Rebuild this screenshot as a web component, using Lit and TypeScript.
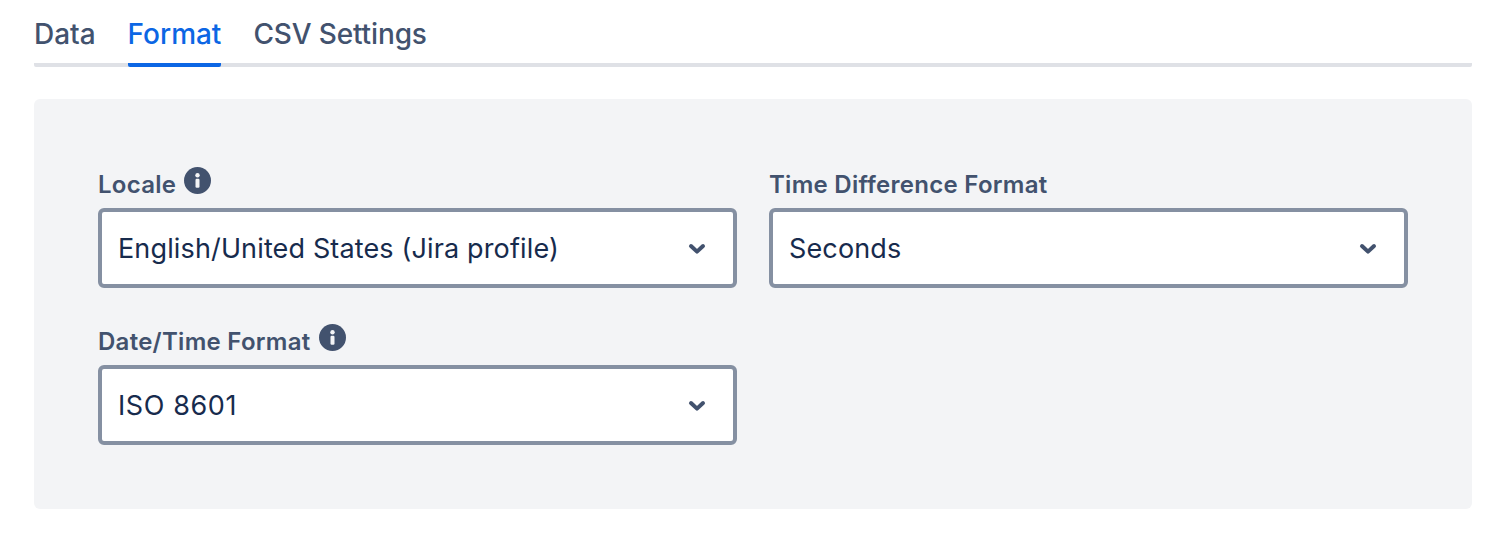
import { LitElement, html, css } from "lit";
import { customElement } from "lit/decorators.js";

const info = html`<svg class="info" viewBox="0 0 27 27" width="27" height="27" aria-hidden="true">
  <circle cx="13.5" cy="13.5" r="13.5" fill="#42526e"></circle>
  <circle cx="13.5" cy="8.2" r="2.2" fill="#f3f4f6"></circle>
  <rect x="11.5" y="11.8" width="4" height="9" rx="1.2" fill="#f3f4f6"></rect>
</svg>`;

const chevron = html`<svg class="chev" viewBox="0 0 18 12" width="18" height="12" aria-hidden="true">
  <path d="M3 3 L9 8.6 L15 3" fill="none" stroke="#42526e" stroke-width="4" stroke-linecap="round" stroke-linejoin="round"></path>
</svg>`;

@customElement("app-root")
export class AppRoot extends LitElement {
  static styles = css`
    :host {
      display: block;
      width: 1502px;
      height: 536px;
      background: #fff;
      font-family: Inter, "Liberation Sans", sans-serif;
      box-sizing: border-box;
      padding: 0 30px 0 34px;
      overflow: hidden;
    }
    .tabs {
      display: flex;
      gap: 32px;
      height: 67px;
      box-sizing: border-box;
      border-bottom: 4px solid #dfe1e6;
      border-radius: 2px;
    }
    .tab {
      font-size: 28px;
      font-weight: 500;
      letter-spacing: -0.02px;
      color: #42526e;
      line-height: 32px;
      padding-top: 18px;
      height: 67px;
      box-sizing: border-box;
      white-space: nowrap;
    }
    .tab.active {
      color: #0c66e4;
      border-bottom: 4px solid #0c66e4;
      border-radius: 2px;
    }
    .tab.csv {
      letter-spacing: -0.14px;
    }
    .panel {
      margin-top: 32px;
      height: 410px;
      box-sizing: border-box;
      background: #f3f4f6;
      border-radius: 6px;
      padding: 64px;
      display: grid;
      grid-template-columns: 639px 639px;
      column-gap: 32px;
      grid-auto-rows: 125px;
      row-gap: 32px;
      align-content: start;
    }
    .field {
      display: flex;
      flex-direction: column;
      justify-content: flex-end;
      height: 125px;
    }
    .label {
      display: flex;
      align-items: flex-start;
      gap: 8px;
      height: 45px;
      font-size: 24px;
      font-weight: 600;
      letter-spacing: 0.27px;
      color: #42526e;
      line-height: 32px;
      box-sizing: border-box;
      padding: 6px 0 0 0;
    }
    .info { margin-top: -2px; }
    .select {
      height: 80px;
      box-sizing: border-box;
      border: 4px solid #8590a2;
      border-radius: 6px;
      background: #fff;
      display: flex;
      align-items: center;
      justify-content: space-between;
      padding: 0 27px 0 16px;
      font-size: 27px;
      letter-spacing: 0.14px;
      color: #172b4d;
      white-space: nowrap;
    }
    .digits { letter-spacing: 0.6px; }
    .chev { margin-top: 2px; }
  `;

  private field(label: string, value: string, withInfo: boolean, digits = false) {
    return html`<div class="field">
      <div class="label"><span>${label}</span>${withInfo ? info : ""}</div>
      <div class="select"><span class=${digits ? "digits" : ""}>${value}</span>${chevron}</div>
    </div>`;
  }

  render() {
    return html`
      <div class="tabs">
        <div class="tab">Data</div>
        <div class="tab active">Format</div>
        <div class="tab csv">CSV Settings</div>
      </div>
      <div class="panel">
        ${this.field("Locale", "English/United States (Jira profile)", true)}
        ${this.field("Time Difference Format", "Seconds", false)}
        ${this.field("Date/Time Format", "ISO 8601", true, true)}
      </div>
    `;
  }
}
